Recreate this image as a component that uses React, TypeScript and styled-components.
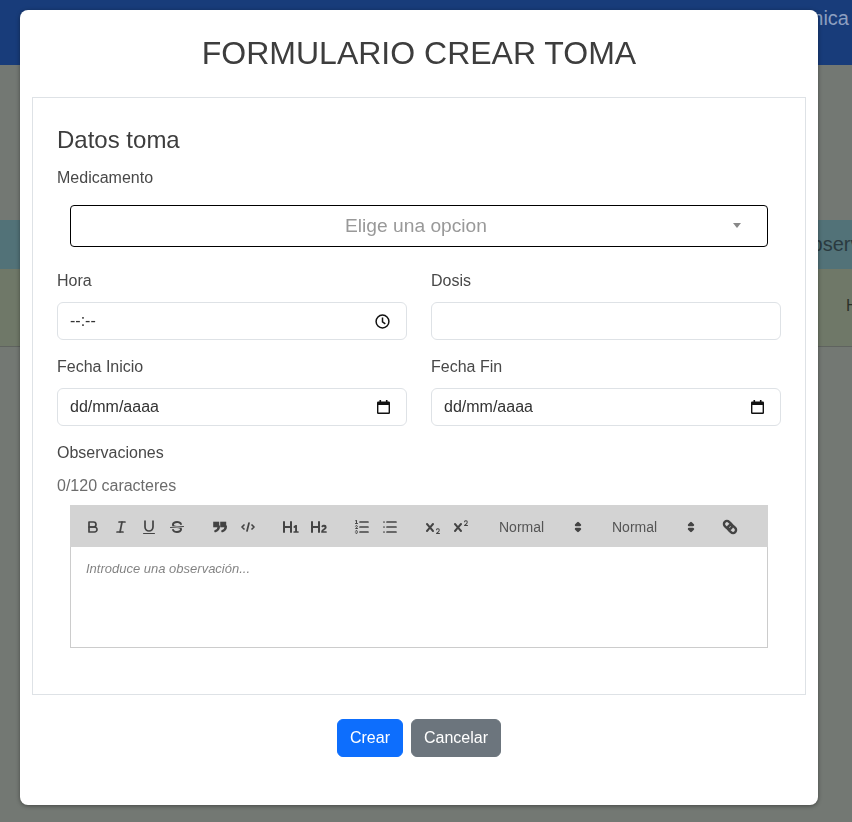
import React from 'react';
import styled, {createGlobalStyle} from 'styled-components';

const GlobalStyle = createGlobalStyle`
  html, body {
    margin: 0;
    padding: 0;
    height: 822px;
    overflow: hidden;
    background: #737873;
    font-family: "Liberation Sans", Arial, sans-serif;
  }
  * {
    box-sizing: border-box;
  }
`

// the page behind the modal, already dimmed by the backdrop
const Page = styled.div`
  width: 852px;
  height: 822px;
  overflow: hidden;
`
const Header = styled.header`
  height: 65px;
  background: #183c7a;
  color: #8d9fc0;
  display: flex;
  justify-content: flex-end;
  padding: 6px 3px 0 0;
  font-size: 20px;
  line-height: 24px;
`
const TableHead = styled.div`
  margin-top: 155px;
  height: 49px;
  background: #527278;
  display: flex;
  align-items: center;
  padding-left: 796px;
  font-size: 20px;
  white-space: nowrap;
  color: #2a3a40;
`
const TableRow = styled.div`
  height: 78px;
  background: #6f7868;
  border-bottom: 1px solid #5f635f;
  padding: 27px 0 0 846px;
  font-size: 16px;
  line-height: 20px;
  white-space: nowrap;
  color: #2a3028;
`
const ModalWrap = styled.div`
  position: fixed;
  inset: 0;
  padding: 10px 0 0 20px;
`
const Modal = styled.div`
  width: 798px;
  height: 795px;
  background: #fff;
  border-radius: 8px;
  padding: 12px 12px 0;
  box-shadow: 0 1px 4px rgba(0, 0, 0, 0.4);
  color: #212529;
`
const Title = styled.h1`
  margin: 0;
  height: 75px;
  text-align: center;
  font-size: 32px;
  font-weight: 400;
  line-height: 62px;
  color: #3d3d3d;
`
const Box = styled.div`
  height: 598px;
  border: 1px solid #dee2e6;
  padding: 27px 24px 0;
`
const Heading = styled.h2`
  margin: 0 0 12px;
  font-size: 24px;
  font-weight: 400;
  line-height: 29px;
  color: #3d3d3d;
`
const Label = styled.label<{$top?: number}>`
  display: block;
  font-size: 16px;
  line-height: 24px;
  margin-top: ${props => props.$top || 0}px;
  margin-bottom: 9px;
  color: #484848;
`
const SelectBox = styled.div`
  position: relative;
  margin: 15px 13px 22px;
  height: 42px;
  border: 1px solid #000;
  border-radius: 4px;
  display: flex;
  align-items: center;
  justify-content: center;
  padding-right: 6px;
  font-size: 19.2px;
  color: #999;
`
const Caret = styled.span`
  position: absolute;
  right: 26px;
  top: 17px;
  border-top: 5px solid #888;
  border-left: 4px solid transparent;
  border-right: 4px solid transparent;
`
const Columns = styled.div`
  display: grid;
  grid-template-columns: 350px 350px;
  column-gap: 24px;
  row-gap: 15px;
`
const FieldBox = styled.div<{$iconRight?: number}>`
  height: 38px;
  border: 1px solid #dee2e6;
  border-radius: 6px;
  background: #fff;
  display: flex;
  align-items: center;
  justify-content: space-between;
  padding: 0 ${props => props.$iconRight || 16}px 0 12px;
  font-size: 16px;
  color: #333;
`
const Counter = styled.div`
  font-size: 16px;
  line-height: 24px;
  margin-bottom: 7px;
  color: #6c6c6c;
`
const Editor = styled.div`
  margin: 0 13px;
`
const Toolbar = styled.div`
  height: 42px;
  background: #d3d3d3;
  padding: 10px 9px 0;
  display: flex;
`
const ToolGroup = styled.span`
  display: flex;
  margin-right: 15px;
`
const ToolButton = styled.button`
  width: 28px;
  height: 24px;
  padding: 3px 5px;
  border: none;
  background: none;
  display: block;
  svg {
    display: block;
    width: 18px;
    height: 18px;
  }
`
const Picker = styled.span`
  position: relative;
  width: 98px;
  height: 24px;
  padding-left: 9px;
  font-size: 14px;
  line-height: 24px;
  color: #555;
  svg {
    position: absolute;
    right: 1px;
    top: 3px;
    width: 18px;
    height: 18px;
  }
`
const EditorBody = styled.div`
  height: 101px;
  border: 1px solid #ccc;
  border-top: none;
  padding: 13px 15px;
  font-size: 13px;
  line-height: 18px;
  font-style: italic;
  color: rgba(0, 0, 0, 0.5);
`
const Footer = styled.div`
  display: flex;
  justify-content: center;
  gap: 8px;
  margin-top: 24px;
`
const Button = styled.button<{$bg: string}>`
  height: 38px;
  padding: 0 12px;
  border: 1px solid ${props => props.$bg};
  border-radius: 6px;
  background: ${props => props.$bg};
  color: #fff;
  font-family: inherit;
  font-size: 16px;
`

const s = {fill: 'none', stroke: '#444', strokeWidth: 1.7, strokeLinecap: 'round' as const, strokeLinejoin: 'round' as const}
const thin = {...s, strokeWidth: 1}
const f = {fill: '#444'}

const Icon = ({children}: {children: React.ReactNode}) => (
    <ToolButton type="button"><svg viewBox="0 0 18 18">{children}</svg></ToolButton>
)

const Arrows = () => (
    <svg viewBox="0 0 18 18">
        <polygon {...s} fill="#444" strokeWidth={2.4} points="7 11 9 13 11 11 7 11"/>
        <polygon {...s} fill="#444" strokeWidth={2.4} points="7 7 9 5 11 7 7 7"/>
    </svg>
)

const ClockIcon = () => (
    <svg width="15" height="15" viewBox="0 0 15 15" fill="none" stroke="#111" strokeWidth="1.5">
        <circle cx="7.5" cy="7.5" r="6.4"/>
        <path d="M7.5 3.6V7.8L10.3 9.9"/>
    </svg>
)

const CalendarIcon = () => (
    <svg width="13" height="14" viewBox="0 0 13 14">
        <path fill="#111" d="M2.5 0h1.6v1.5h4.8V0h1.6v1.5h1.3A1.2 1.2 0 0 1 13 2.7v10.1A1.2 1.2 0 0 1 11.8 14H1.2A1.2 1.2 0 0 1 0 12.8V2.7A1.2 1.2 0 0 1 1.2 1.5h1.3ZM1.4 5v7.6h10.2V5Z"/>
    </svg>
)

export default function App() {
    return (
        <>
            <GlobalStyle/>
            <Page>
                <Header>Clínica</Header>
                <TableHead>Observaciones</TableHead>
                <TableRow>Hoy</TableRow>
            </Page>
            <ModalWrap>
                <Modal>
                    <Title>FORMULARIO CREAR TOMA</Title>
                    <Box>
                        <Heading>Datos toma</Heading>
                        <Label>Medicamento</Label>
                        <SelectBox>Elige una opcion<Caret/></SelectBox>
                        <Columns>
                            <div>
                                <Label>Hora</Label>
                                <FieldBox $iconRight={16}>--:--<ClockIcon/></FieldBox>
                            </div>
                            <div>
                                <Label>Dosis</Label>
                                <FieldBox/>
                            </div>
                            <div>
                                <Label>Fecha Inicio</Label>
                                <FieldBox $iconRight={16}>dd/mm/aaaa<CalendarIcon/></FieldBox>
                            </div>
                            <div>
                                <Label>Fecha Fin</Label>
                                <FieldBox $iconRight={16}>dd/mm/aaaa<CalendarIcon/></FieldBox>
                            </div>
                        </Columns>
                        <Label $top={15}>Observaciones</Label>
                        <Counter>0/120 caracteres</Counter>
                        <Editor>
                            <Toolbar>
                                <ToolGroup>
                                    <Icon>
                                        <path {...s} d="M5,4H9.5A2.5,2.5,0,0,1,12,6.5v0A2.5,2.5,0,0,1,9.5,9H5A0,0,0,0,1,5,9V4A0,0,0,0,1,5,4Z"/>
                                        <path {...s} d="M5,9h5.5A2.5,2.5,0,0,1,13,11.5v0A2.5,2.5,0,0,1,10.5,14H5a0,0,0,0,1,0,0V9A0,0,0,0,1,5,9Z"/>
                                    </Icon>
                                    <Icon>
                                        <line {...s} x1="7" x2="13" y1="4" y2="4"/>
                                        <line {...s} x1="5" x2="11" y1="14" y2="14"/>
                                        <line {...s} x1="8" x2="10" y1="14" y2="4"/>
                                    </Icon>
                                    <Icon>
                                        <path {...s} d="M5,3V9a4.012,4.012,0,0,0,4,4H9a4.012,4.012,0,0,0,4-4V3"/>
                                        <rect {...f} height="1" rx=".5" ry=".5" width="12" x="3" y="15"/>
                                    </Icon>
                                    <Icon>
                                        <line {...thin} x1="15.5" x2="2.5" y1="8.5" y2="9.5"/>
                                        <path {...f} d="M9.007,8C6.542,7.791,6,7.519,6,6.5,6,5.792,7.283,5,9,5c1.571,0,2.765.679,2.969,1.309a1,1,0,0,0,1.9-.617C13.356,4.106,11.354,3,9,3,6.2,3,4,4.538,4,6.5a3.2,3.2,0,0,0,.5,1.843Z"/>
                                        <path {...f} d="M8.984,10C11.457,10.208,12,10.479,12,11.5c0,.708-1.283,1.5-3,1.5-1.571,0-2.765-.679-2.969-1.309a1,1,0,1,0-1.9.617C4.644,13.894,6.646,15,9,15c2.8,0,5-1.538,5-3.5a3.2,3.2,0,0,0-.5-1.843Z"/>
                                    </Icon>
                                </ToolGroup>
                                <ToolGroup>
                                    <Icon>
                                        <rect {...f} height="4" width="4.4" x="3" y="4.5" stroke="#444" strokeWidth="1.6"/>
                                        <rect {...f} height="4" width="4.4" x="10" y="4.5" stroke="#444" strokeWidth="1.6"/>
                                        <path {...s} strokeWidth={2.4} d="M7.8,8.5c0,2.8-1.6,4-3.4,4.6"/>
                                        <path {...s} strokeWidth={2.4} d="M14.8,8.5c0,2.8-1.6,4-3.4,4.6"/>
                                    </Icon>
                                    <Icon>
                                        <polyline {...s} points="5 7 3 9 5 11"/>
                                        <polyline {...s} points="13 7 15 9 13 11"/>
                                        <line {...s} x1="10" x2="8" y1="5" y2="13"/>
                                    </Icon>
                                </ToolGroup>
                                <ToolGroup>
                                    <Icon>
                                        <path {...f} d="M10,4V14a1,1,0,0,1-2,0V10H3v4a1,1,0,0,1-2,0V4A1,1,0,0,1,3,4V8H8V4a1,1,0,0,1,2,0Zm6.06787,9.209H14.98975V7.59863a.54085.54085,0,0,0-.605-.60547h-.62744a1.01119,1.01119,0,0,0-.748.29688L11.645,8.56641a.5435.5435,0,0,0-.022.8584l.28613.30762a.53861.53861,0,0,0,.84717.0332l.09912-.08789a1.2137,1.2137,0,0,0,.2417-.35254h.02246s-.01123.30859-.01123.60547V13.209H12.041a.54085.54085,0,0,0-.605.60547v.43945a.54085.54085,0,0,0,.605.60547h4.02686a.54085.54085,0,0,0,.605-.60547v-.43945A.54085.54085,0,0,0,16.06787,13.209Z"/>
                                    </Icon>
                                    <Icon>
                                        <path {...f} d="M16.73975,13.81445v.43945a.54085.54085,0,0,1-.605.60547H11.855a.58392.58392,0,0,1-.64893-.60547V14.0127c0-2.90527,3.39941-3.42187,3.39941-4.55469a.77675.77675,0,0,0-.84717-.78125,1.17684,1.17684,0,0,0-.83594.38477c-.2749.26367-.561.374-.85791.13184l-.4292-.34082c-.30811-.24219-.38525-.51758-.1543-.81445a2.97155,2.97155,0,0,1,2.45361-1.17676,2.45393,2.45393,0,0,1,2.68408,2.40918c0,2.45312-3.1792,2.92676-3.27832,3.93848h2.79443A.54085.54085,0,0,1,16.73975,13.81445ZM9,3A.99974.99974,0,0,0,8,4V8H3V4A1,1,0,0,0,1,4V14a1,1,0,0,0,2,0V10H8v4a1,1,0,0,0,2,0V4A.99974.99974,0,0,0,9,3Z"/>
                                    </Icon>
                                </ToolGroup>
                                <ToolGroup>
                                    <Icon>
                                        <line {...s} x1="7" x2="15" y1="4" y2="4"/>
                                        <line {...s} x1="7" x2="15" y1="9" y2="9"/>
                                        <line {...s} x1="7" x2="15" y1="14" y2="14"/>
                                        <line {...thin} x1="2.5" x2="4.5" y1="5.5" y2="5.5"/>
                                        <path {...f} d="M3.5,6A0.5,0.5,0,0,1,3,5.5V3.085l-0.276.138A0.5,0.5,0,0,1,2.053,3c-0.124-.247-0.023-0.324.224-0.447l1-.5A0.5,0.5,0,0,1,4,2.5v3A0.5,0.5,0,0,1,3.5,6Z"/>
                                        <path {...thin} d="M4.5,10.5h-2c0-.234,1.85-1.076,1.85-2.234A0.959,0.959,0,0,0,2.5,8.156"/>
                                        <path {...thin} d="M2.5,14.846a0.959,0.959,0,0,0,1.85-.109A0.7,0.7,0,0,0,3.75,14a0.688,0.688,0,0,0,.6-0.736,0.959,0.959,0,0,0-1.85-.109"/>
                                    </Icon>
                                    <Icon>
                                        <line {...s} x1="6" x2="15" y1="4" y2="4"/>
                                        <line {...s} x1="6" x2="15" y1="9" y2="9"/>
                                        <line {...s} x1="6" x2="15" y1="14" y2="14"/>
                                        <line {...s} x1="3" x2="3" y1="4" y2="4"/>
                                        <line {...s} x1="3" x2="3" y1="9" y2="9"/>
                                        <line {...s} x1="3" x2="3" y1="14" y2="14"/>
                                    </Icon>
                                </ToolGroup>
                                <ToolGroup>
                                    <Icon>
                                        <path {...f} d="M15.5,15H13.861a3.858,3.858,0,0,0,1.914-2.975,1.8,1.8,0,0,0-1.6-1.751A1.921,1.921,0,0,0,12.021,11.7a0.50013,0.50013,0,1,0,.957.291h0a0.914,0.914,0,0,1,1.053-.725,0.81,0.81,0,0,1,.744.762c0,1.076-1.16971,1.86982-1.93971,2.43082A1.45639,1.45639,0,0,0,12,15.5a0.5,0.5,0,0,0,.5.5h3A0.5,0.5,0,0,0,15.5,15Z"/>
                                        <path {...f} d="M9.65,5.241a1,1,0,0,0-1.409.108L6,7.964,3.759,5.349A1,1,0,0,0,2.192,6.59178Q2.21541,6.6213,2.241,6.649L4.684,9.5,2.241,12.35A1,1,0,0,0,3.71,13.70722q0.02557-.02768.049-0.05722L6,11.036,8.241,13.65a1,1,0,1,0,1.567-1.24277Q9.78459,12.3777,9.759,12.35L7.316,9.5,9.759,6.651A1,1,0,0,0,9.65,5.241Z"/>
                                    </Icon>
                                    <Icon>
                                        <path {...f} d="M15.5,7H13.861a4.015,4.015,0,0,0,1.914-2.975,1.8,1.8,0,0,0-1.6-1.751A1.922,1.922,0,0,0,12.021,3.7a0.5,0.5,0,1,0,.957.291,0.917,0.917,0,0,1,1.053-.725,0.81,0.81,0,0,1,.744.762c0,1.077-1.164,1.925-1.934,2.486A1.423,1.423,0,0,0,12,7.5a0.5,0.5,0,0,0,.5.5h3A0.5,0.5,0,0,0,15.5,7Z"/>
                                        <path {...f} d="M9.651,5.241a1,1,0,0,0-1.41.108L6,7.964,3.759,5.349a1,1,0,1,0-1.519,1.3L4.683,9.5,2.241,12.35a1,1,0,1,0,1.519,1.3L6,11.036,8.241,13.65a1,1,0,0,0,1.519-1.3L7.317,9.5,9.759,6.651A1,1,0,0,0,9.651,5.241Z"/>
                                    </Icon>
                                </ToolGroup>
                                <ToolGroup><Picker>Normal<Arrows/></Picker></ToolGroup>
                                <ToolGroup><Picker>Normal<Arrows/></Picker></ToolGroup>
                                <ToolGroup>
                                    <Icon>
                                        <rect {...s} strokeWidth={2.4} x="2.5" y="4" width="9" height="6" rx="3" transform="rotate(45 7 7)"/>
                                        <rect {...s} strokeWidth={2.4} x="6.5" y="8" width="9" height="6" rx="3" transform="rotate(45 11 11)"/>
                                    </Icon>
                                </ToolGroup>
                            </Toolbar>
                            <EditorBody>Introduce una observación...</EditorBody>
                        </Editor>
                    </Box>
                    <Footer>
                        <Button $bg="#0d6efd">Crear</Button>
                        <Button $bg="#6c757d">Cancelar</Button>
                    </Footer>
                </Modal>
            </ModalWrap>
        </>
    );
};
